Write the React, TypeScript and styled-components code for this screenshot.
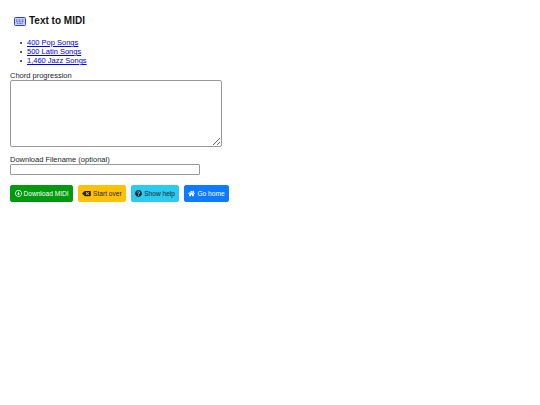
import styled, { createGlobalStyle } from "styled-components";
import { FaRegArrowAltCircleDown, FaQuestionCircle, FaHome, FaBackspace } from "react-icons/fa";

const GlobalStyle = createGlobalStyle`
  html, body {
    margin: 0;
    background: #fff;
    font-family: "Liberation Sans", Arial, sans-serif;
    font-size: 7.5px;
    color: #212529;
  }
`;

const Page = styled.div`
  width: 540px;
  height: 405px;
  box-sizing: border-box;
  padding: 15px 10px 0;
`;

const Title = styled.h1`
  display: flex;
  align-items: center;
  gap: 3px;
  margin: 0 0 0 4px;
  height: 12px;
  font-size: 10px;
  line-height: 12px;
  font-weight: bold;
  color: #111;
`;

const SongList = styled.ul`
  margin: 11px 0 0;
  padding: 0 0 0 10px;
  line-height: 9px;
  list-style: none;
`;

const SongItem = styled.li`
  display: flex;
  align-items: center;
  gap: 5px;
  &::before {
    content: "";
    width: 2px;
    height: 2px;
    border-radius: 50%;
    background: #222;
  }
`;

const SongLink = styled.a`
  color: #0000ee;
  text-decoration: underline;
`;

const Label = styled.label`
  display: block;
  line-height: 9px;
  color: #212529;
`;

const ChordField = styled.div`
  margin-top: 6px;
`;

const FilenameField = styled.div`
  margin-top: 8px;
`;

const ChordInput = styled.textarea`
  display: block;
  box-sizing: border-box;
  width: 212px;
  height: 67px;
  margin: 0;
  padding: 2px;
  border: 1px solid #999;
  border-radius: 2px;
  background: #fff;
`;

const FilenameInput = styled.input`
  display: block;
  box-sizing: border-box;
  width: 190px;
  height: 11px;
  margin: 0;
  padding: 1px 2px;
  border: 1px solid #999;
  border-radius: 1px;
  background: #fff;
`;

const Buttons = styled.div`
  display: flex;
  gap: 4.5px;
  margin-top: 10px;
`;

const ActionButton = styled.button<{ $bg: string; $fg: string }>`
  display: flex;
  align-items: center;
  gap: 2px;
  height: 17px;
  padding: 0 3.5px;
  border: 1px solid ${(p) => p.$bg};
  border-radius: 2px;
  background: ${(p) => p.$bg};
  color: ${(p) => p.$fg};
  font-family: inherit;
  font-size: 6.6px;
  white-space: nowrap;
  svg {
    flex: none;
    width: 7px;
    height: 7px;
  }
`;

const StartOverIcon = styled(FaBackspace)`
  && {
    width: 9px;
  }
`;

function KeyboardIcon() {
  return (
    <svg width="12" height="9" viewBox="0 0 12 9">
      <rect x="0.5" y="0.5" width="11" height="8" rx="1" fill="#c9d3f5" stroke="#2a3fd0" />
      <path d="M2 3h8M2 4.7h8M3 6.4h6" stroke="#2a3fd0" strokeWidth="0.8" strokeDasharray="1 0.5" fill="none" />
    </svg>
  );
}

export default function App() {
  return (
    <Page>
      <GlobalStyle />
      <Title>
        <KeyboardIcon />
        Text to MIDI
      </Title>
      <SongList>
        <SongItem><SongLink href="#pop">400 Pop Songs</SongLink></SongItem>
        <SongItem><SongLink href="#latin">500 Latin Songs</SongLink></SongItem>
        <SongItem><SongLink href="#jazz">1,460 Jazz Songs</SongLink></SongItem>
      </SongList>
      <ChordField>
        <Label htmlFor="chords">Chord progression</Label>
        <ChordInput id="chords" />
      </ChordField>
      <FilenameField>
        <Label htmlFor="filename">Download Filename (optional)</Label>
        <FilenameInput id="filename" type="text" />
      </FilenameField>
      <Buttons>
        <ActionButton $bg="#009a0f" $fg="#ffffff"><FaRegArrowAltCircleDown />Download MIDI</ActionButton>
        <ActionButton $bg="#ffc107" $fg="#212529"><StartOverIcon />Start over</ActionButton>
        <ActionButton $bg="#2bcbef" $fg="#212529"><FaQuestionCircle />Show help</ActionButton>
        <ActionButton $bg="#0d7bff" $fg="#ffffff"><FaHome />Go home</ActionButton>
      </Buttons>
    </Page>
  );
}
